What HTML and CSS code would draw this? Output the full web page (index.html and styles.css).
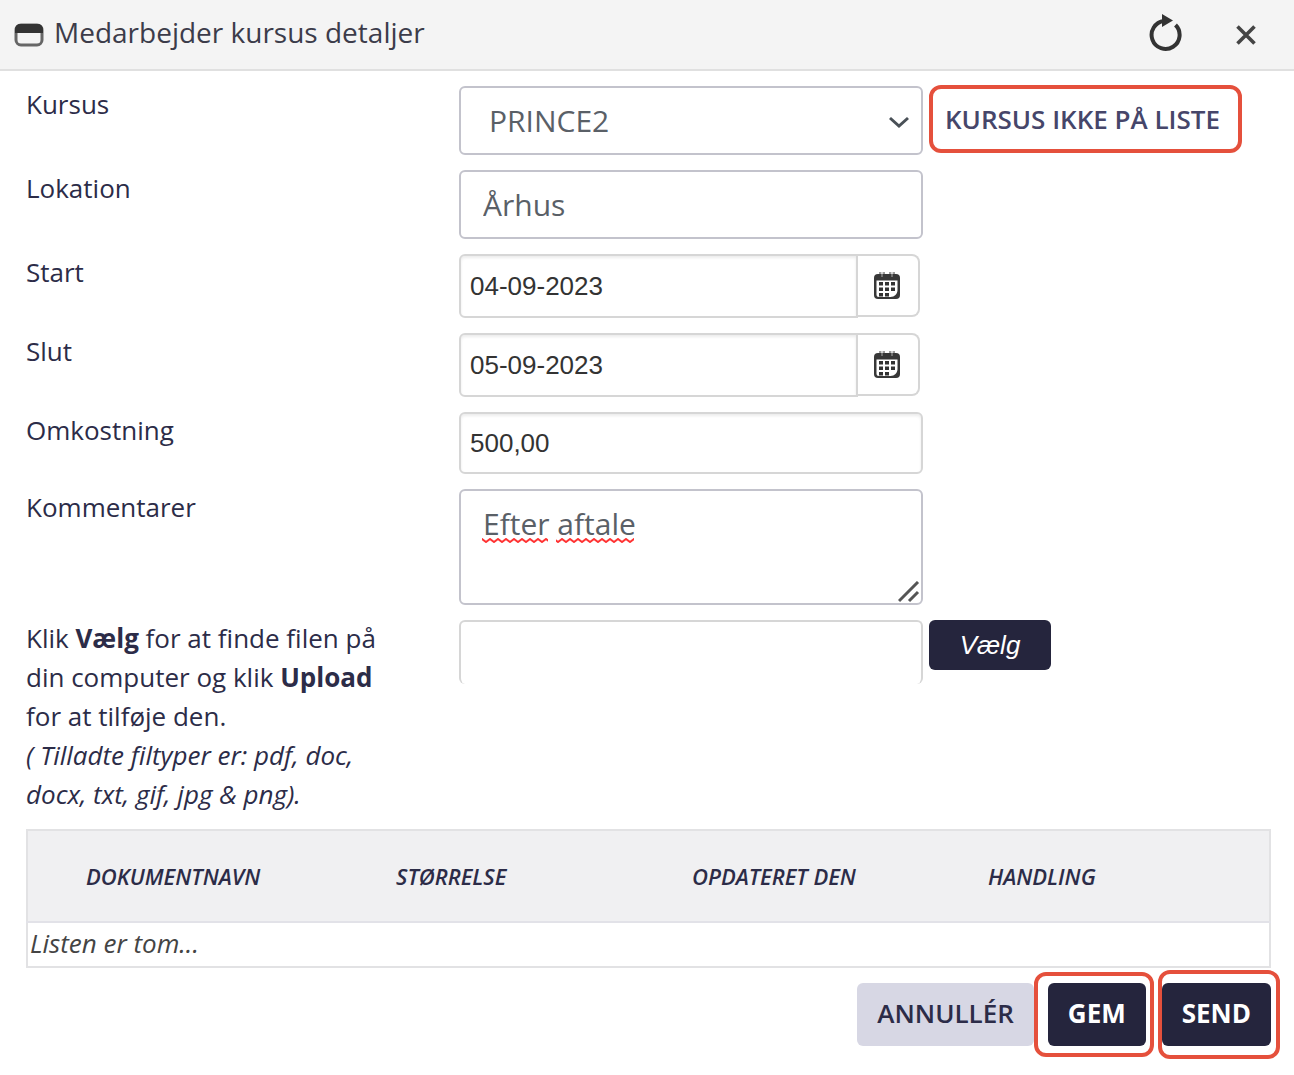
FILE: index.html
```html
<!DOCTYPE html>
<html lang="da">
<head>
  <meta charset="UTF-8">
  <meta name="viewport" content="width=device-width, initial-scale=1.0">
  <title>Medarbejder kursus detaljer</title>
  <link rel="stylesheet" href="styles.css">
</head>
<body>

  <header class="titlebar">
    <svg class="window-icon" width="30" height="24" viewBox="0 0 30 24" aria-hidden="true">
      <rect x="2" y="2" width="26" height="20" rx="5" fill="#f4f4f4" stroke="#666" stroke-width="3"/>
      <path d="M1 10V6a5 5 0 0 1 5-5h18a5 5 0 0 1 5 5v4z" fill="#333"/>
    </svg>
    <h1>Medarbejder kursus detaljer</h1>
    <button type="button" class="icon-btn" aria-label="Genindlæs">
      <svg width="36" height="42" viewBox="0 0 36 42">
        <path d="M27.500 11A14 14 0 1 1 16 7" fill="none" stroke="#333" stroke-width="4"/>
        <path d="M14 0L25 6.500L14 13z" fill="#333"/>
      </svg>
    </button>
    <button type="button" class="icon-btn" aria-label="Luk">
      <svg width="20" height="20" viewBox="0 0 20 20">
        <path d="M1.500 1.500L18.500 18.500M18.500 1.500L1.500 18.500" stroke="#444" stroke-width="3.600"/>
      </svg>
    </button>
  </header>

  <form class="course-form">
    <div class="row">
      <label for="course">Kursus</label>
      <div class="field select-field">
        <select id="course" class="control tall">
          <option>PRINCE2</option>
        </select>
        <svg class="chevron" width="20" height="12" viewBox="0 0 20 12" aria-hidden="true">
          <path d="M1 2L10 10L19 2" fill="none" stroke="#495057" stroke-width="3"/>
        </svg>
      </div>
      <div class="extra">
        <div class="highlight highlight-link">
          <a href="#">KURSUS IKKE PÅ LISTE</a>
        </div>
      </div>
    </div>

    <div class="row">
      <label for="location">Lokation</label>
      <input type="text" id="location" class="control tall" value="Århus">
    </div>

    <div class="row">
      <label for="start">Start</label>
      <div class="date-field">
        <input type="text" id="start" class="control plain" value="04-09-2023">
        <button type="button" class="calendar-btn" aria-label="Vælg startdato">
          <svg width="28" height="30" viewBox="0 0 28 30">
            <use href="#calendar"/>
          </svg>
        </button>
      </div>
    </div>

    <div class="row">
      <label for="end">Slut</label>
      <div class="date-field">
        <input type="text" id="end" class="control plain" value="05-09-2023">
        <button type="button" class="calendar-btn" aria-label="Vælg slutdato">
          <svg width="28" height="30" viewBox="0 0 28 30">
            <use href="#calendar"/>
          </svg>
        </button>
      </div>
    </div>

    <div class="row">
      <label for="cost">Omkostning</label>
      <input type="text" id="cost" class="control plain cost" value="500,00">
    </div>

    <div class="row">
      <label for="comments">Kommentarer</label>
      <div class="field">
        <textarea id="comments" class="control" spellcheck="false">Efter aftale</textarea>
        <!-- spelling marks under the two words -->
        <svg class="spelling" width="152" height="5" viewBox="0 0 152 5" aria-hidden="true">
          <defs>
            <pattern id="wave" width="8" height="5" patternUnits="userSpaceOnUse">
              <path d="M-2 2.500L0 1L4 4L8 1L10 2.500" fill="none" stroke="#f33" stroke-width="2"/>
            </pattern>
          </defs>
          <rect width="66" height="5" fill="url(#wave)"/>
          <rect x="74" width="78" height="5" fill="url(#wave)"/>
        </svg>
        <svg class="grip" width="22" height="22" viewBox="0 0 22 22" aria-hidden="true">
          <path d="M1 20L20 1M11 20L20 11" stroke="#555" stroke-width="3"/>
        </svg>
      </div>
    </div>

    <div class="row upload-row">
      <label for="file">Klik <b>Vælg</b> for at finde filen på din computer og klik <b>Upload</b> for at tilføje den.<br><i>( Tilladte filtyper er: pdf, doc, docx, txt, gif, jpg &amp; png).</i></label>
      <input type="text" id="file" class="control plain file-name" readonly>
      <div class="extra">
        <button type="button" class="choose-btn">Vælg</button>
      </div>
    </div>

    <table class="documents">
      <thead>
        <tr>
          <th>DOKUMENTNAVN</th>
          <th>STØRRELSE</th>
          <th>OPDATERET DEN</th>
          <th>HANDLING</th>
        </tr>
      </thead>
      <tbody>
        <tr>
          <td colspan="4">Listen er tom...</td>
        </tr>
      </tbody>
    </table>

    <div class="actions">
      <button type="button" class="btn btn-light">ANNULLÉR</button>
      <div class="highlight highlight-save">
        <button type="button" class="btn">GEM</button>
      </div>
      <div class="highlight highlight-send">
        <button type="submit" class="btn">SEND</button>
      </div>
    </div>
  </form>

  <svg class="sprite" aria-hidden="true">
    <symbol id="calendar" viewBox="0 0 28 30">
      <path d="M5 3h18a4 4 0 0 1 4 4v17a4 4 0 0 1-4 4H5a4 4 0 0 1-4-4V7a4 4 0 0 1 4-4z" fill="#383838"/>
      <path d="M3.500 9.500h21V19c0 4-3 7-7 7H6a2.500 2.500 0 0 1-2.500-2.500z" fill="#fff"/>
      <path d="M7 1v4M11 1v4M17 1v4M21 1v4" stroke="#383838" stroke-width="1"/>
      <path d="M9 1v5M19 1v5" stroke="#aaa" stroke-width="1"/>
      <path d="M6 11h4v3.500H6zM12 11h4v3.500h-4zM18 11h4v3.500h-4zM6 16.500h4V20H6zM12 16.500h4V20h-4zM18 16.500h4V20h-4zM6 22h4v3.500H6zM12 22h4v3.500h-4z" fill="#333"/>
    </symbol>
  </svg>

</body>
</html>
```

FILE: styles.css
```css
:root {
  --dark: #25253d;
  --text: #2c2c48;
  --border: #c3c3cc;
  --border-light: #d6d6d6;
  --red: #e5503c;
}

* {
  margin: 0;
  padding: 0;
  box-sizing: border-box;
}

body {
  background: #fff;
  color: var(--text);
  font-family: "Open Sans", sans-serif;
  font-size: 26px;
  line-height: 39px;
}

button {
  border: none;
  cursor: pointer;
}

.titlebar {
  display: flex;
  align-items: center;
  gap: 10px;
  height: 71px;
  padding: 0 38px 0 14px;
  background: #f4f4f4;
  border-bottom: 2px solid #e0e0e0;
}

.titlebar h1 {
  flex: 1;
  padding-bottom: 4px;
  font-size: 28px;
  font-weight: 400;
  color: #3c3c4a;
}

.icon-btn {
  display: flex;
  background: none;
}

.icon-btn + .icon-btn {
  margin-left: 42px;
}

.course-form {
  display: flex;
  flex-direction: column;
  gap: 15px;
  padding: 15px 23px 15px 26px;
}

.row {
  display: grid;
  grid-template-columns: 433fr 464fr 348fr;
  align-items: start;
}

.row label {
  margin-top: -1px;
  padding-right: 70px;
}

.field {
  position: relative;
  display: flex;
}

.extra {
  display: flex;
  padding-left: 6px;
}

.control {
  width: 100%;
  height: 64px;
  padding: 0 22px;
  border: 2px solid var(--border);
  border-radius: 6px;
  background: #fff;
  color: #5a6067;
  font-family: inherit;
  font-size: 30px;
  outline: none;
}

.tall {
  height: 69px;
}

select.control {
  appearance: none;
  padding-left: 28px;
}

.plain {
  padding: 0 9px;
  border-color: var(--border-light);
  box-shadow: inset 0 2px 3px rgba(0, 0, 0, 0.08);
  color: #333;
  font-family: "Liberation Sans", sans-serif;
  font-size: 26px;
}

.cost {
  height: 62px;
}

textarea.control {
  height: 116px;
  padding-top: 13px;
  line-height: 40px;
  resize: none;
}

.chevron {
  position: absolute;
  top: 30px;
  right: 14px;
}

.spelling {
  position: absolute;
  top: 49px;
  left: 23px;
}

.grip {
  position: absolute;
  right: 3px;
  bottom: 2px;
}

.date-field {
  display: flex;
  align-items: flex-start;
  padding-right: 3px;
}

.date-field .control {
  flex: 1;
  min-width: 0;
  border-radius: 6px 0 0 6px;
}

.calendar-btn {
  display: flex;
  align-items: center;
  justify-content: center;
  width: 62px;
  height: 63px;
  padding-right: 2px;
  border: 2px solid var(--border-light);
  border-left: none;
  border-radius: 0 8px 8px 0;
  background: #fff;
}

.file-name {
  border-bottom: none;
  box-shadow: none;
}

.choose-btn {
  width: 122px;
  height: 50px;
  border-radius: 6px;
  background: var(--dark);
  color: #fff;
  font-family: "Liberation Sans", sans-serif;
  font-size: 26px;
  font-style: italic;
}

/* red frames round the buttons that the user has to press */
.highlight {
  border: 4px solid var(--red);
  border-radius: 12px;
}

.highlight-link {
  display: flex;
  align-items: center;
  height: 68px;
  margin-top: -1px;
  padding: 0 18px 0 12px;
}

.highlight-link a {
  color: #46466a;
  font-weight: 600;
  text-decoration: none;
  white-space: nowrap;
}

.documents {
  width: 100%;
  table-layout: fixed;
  border-collapse: collapse;
  border: 2px solid #e2e2e4;
  font-style: italic;
}

.documents th {
  width: 296px;
  height: 92px;
  padding-left: 14px;
  background: #f0f0f2;
  border-bottom: 2px solid #e2e2e8;
  font-size: 22px;
  font-weight: 600;
  text-align: left;
}

.documents th:first-child {
  width: 355px;
  padding-left: 58px;
}

.documents th:last-child {
  width: auto;
}

.documents td {
  height: 45px;
  padding: 0 0 2px 2px;
  color: #444;
}

.actions {
  display: flex;
  align-items: center;
  justify-content: flex-end;
  margin: -13px -9px 0 0;
}

.btn {
  height: 63px;
  padding: 0 20px 4px;
  border-radius: 6px;
  background: var(--dark);
  color: #fff;
  font-family: inherit;
  font-size: 26px;
  font-weight: 700;
}

.btn-light {
  background: #d7d7e4;
  color: var(--text);
  font-weight: 600;
}

.highlight .btn {
  display: block;
}

.highlight-save {
  margin-right: 4px;
  padding: 7px 4px 7px 10px;
}

.highlight-send {
  padding: 9px 5px 9px 0;
}

.sprite {
  position: absolute;
  width: 0;
  height: 0;
}
```
